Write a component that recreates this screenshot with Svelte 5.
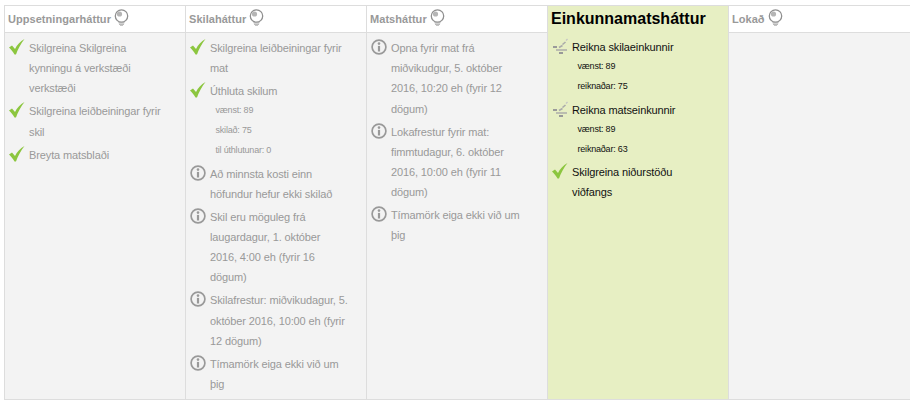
<script>
  const phases = [
    {
      name: 'Uppsetningarháttur',
      tasks: [
        { icon: 'check', text: 'Skilgreina Skilgreina kynningu á verkstæði verkstæði' },
        { icon: 'check', text: 'Skilgreina leiðbeiningar fyrir skil' },
        { icon: 'check', text: 'Breyta matsblaði' }
      ]
    },
    {
      name: 'Skilaháttur',
      tasks: [
        { icon: 'check', text: 'Skilgreina leiðbeiningar fyrir mat' },
        { icon: 'check', text: 'Úthluta skilum', details: ['vænst: 89', 'skilað: 75', 'til úthlutunar: 0'] },
        { icon: 'info', text: 'Að minnsta kosti einn höfundur hefur ekki skilað' },
        { icon: 'info', text: 'Skil eru möguleg frá laugardagur, 1. október 2016, 4:00 eh (fyrir 16 dögum)' },
        { icon: 'info', text: 'Skilafrestur: miðvikudagur, 5. október 2016, 10:00 eh (fyrir 12 dögum)' },
        { icon: 'info', text: 'Tímamörk eiga ekki við um þig' }
      ]
    },
    {
      name: 'Matsháttur',
      tasks: [
        { icon: 'info', text: 'Opna fyrir mat frá miðvikudgur, 5. október 2016, 10:20 eh (fyrir 12 dögum)' },
        { icon: 'info', text: 'Lokafrestur fyrir mat: fimmtudagur, 6. október 2016, 10:00 eh (fyrir 11 dögum)' },
        { icon: 'info', text: 'Tímamörk eiga ekki við um þig' }
      ]
    },
    {
      name: 'Einkunnamatsháttur',
      active: true,
      tasks: [
        { icon: 'calc', text: 'Reikna skilaeinkunnir', details: ['vænst: 89', 'reiknaðar: 75'] },
        { icon: 'calc', text: 'Reikna matseinkunnir', details: ['vænst: 89', 'reiknaðar: 63'] },
        { icon: 'check', text: 'Skilgreina niðurstöðu viðfangs' }
      ]
    },
    { name: 'Lokað', tasks: [] }
  ];
</script>

<div class="planner">
  {#each phases as phase}
    <section class="phase" class:active={phase.active}>
      <header>
        <h3>{phase.name}</h3>
        {#if !phase.active}
          <svg class="bulb" width="15" height="17" viewBox="0 0 15 17">
            <circle cx="7.5" cy="7" r="6.2" fill="#fff" stroke="#8f8f8f" stroke-width="1.3" />
            <circle cx="5.5" cy="5" r="2.6" fill="#b5b5b5" />
            <path d="M4.5 13.8h6M5 15.2h5" stroke="#a5a5a5" stroke-width="1.1" />
            <path d="M6 16.5h3" stroke="#c4c4c4" stroke-width="1" />
          </svg>
        {/if}
      </header>
      <ul>
        {#each phase.tasks as task}
          <li>
            {#if task.icon === 'check'}
              <svg class="icon" width="16" height="16" viewBox="0 0 16 16">
                <path d="M0 8.5 3 6.5 6 10C8 6 11 2.5 15.5 0 12 4.5 8.8 10 7 15.5L5.5 15.5C4 12.8 2 10.5 0 8.5Z" fill="#8cc63f" />
              </svg>
            {:else if task.icon === 'info'}
              <svg class="icon" width="16" height="16" viewBox="0 0 16 16">
                <circle cx="8" cy="8" r="6.9" fill="none" stroke="#999" stroke-width="1.7" />
                <circle cx="8" cy="4.6" r="1.3" fill="#999" />
                <rect x="6.9" y="6.9" width="2.2" height="5.6" fill="#999" />
              </svg>
            {:else}
              <svg class="icon" width="16" height="16" viewBox="0 0 16 16">
                <path d="M1 9h4" stroke="#9a9a9a" stroke-width="2" fill="none" />
                <path d="M7 9.5l3.5-2M10.5 6.5l3-2.5" stroke="#aaa" stroke-width="1.6" fill="none" />
                <path d="M14 2.5l1.5-1.5" stroke="#c4c4c4" stroke-width="1.2" fill="none" />
                <path d="M4 12h11" stroke="#a8a8a8" stroke-width="1.4" fill="none" />
                <path d="M7 15h4" stroke="#999" stroke-width="2" fill="none" />
              </svg>
            {/if}
            <div class="body">
              <div class="title">{task.text}</div>
              {#each task.details ?? [] as d}
                <div class="detail">{d}</div>
              {/each}
            </div>
          </li>
        {/each}
      </ul>
    </section>
  {/each}
</div>

<style>
  :global(body) {
    background: #fff;
  }
  .planner {
    display: grid;
    grid-template-columns: repeat(5, 181px);
    width: 906px;
    height: 395px;
    margin: 5px 0 0 4px;
    border: 1px solid #ddd;
    box-sizing: border-box;
    font-family: "Liberation Sans", Arial, sans-serif;
    font-size: 11px;
    letter-spacing: -0.12px;
    line-height: 20.2px;
    color: #999;
  }
  .phase {
    display: flex;
    flex-direction: column;
    border-right: 1px solid #ddd;
    min-width: 0;
  }
  .phase:last-child {
    border-right: 0;
  }
  header {
    height: 26px;
    flex: none;
    display: flex;
    align-items: flex-start;
    gap: 3px;
    padding: 0 3px;
    background: #fff;
    border-bottom: 1px solid #ddd;
  }
  h3 {
    margin: 3px 0 0;
    font-size: 11px;
    letter-spacing: 0.05px;
    line-height: 20px;
    font-weight: bold;
    color: #999;
  }
  .bulb {
    margin-top: 3px;
  }
  ul {
    flex: 1;
    margin: 0;
    padding: 5px 0 0;
    list-style: none;
    background: #f3f3f3;
  }
  li {
    display: flex;
    gap: 4px;
    padding-left: 4px;
    margin-bottom: 2.8px;
  }
  .icon {
    flex: none;
    margin-top: 1px;
  }
  .body {
    width: 140px;
    flex: none;
  }
  .detail {
    font-size: 9px;
    letter-spacing: -0.2px;
    line-height: 19.8px;
    padding-left: 5.5px;
  }
  .active {
    background: #e7efc3;
  }
  .active header,
  .active ul {
    background: #e7efc3;
    border-bottom: 0;
  }
  .active h3 {
    font-size: 16px;
    margin-top: 3px;
    letter-spacing: 0;
    color: #000;
  }
  .active .title,
  .active .detail {
    color: #111;
  }
</style>
